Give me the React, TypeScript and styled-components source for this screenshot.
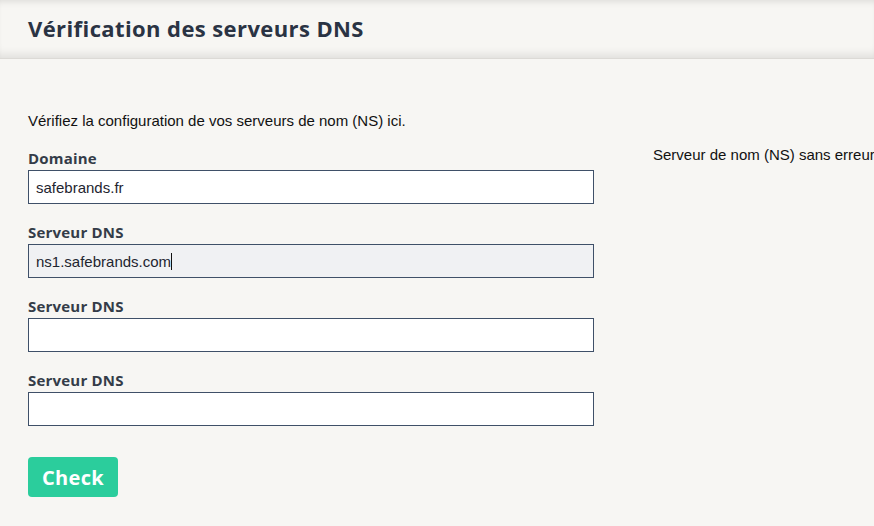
import styled, { createGlobalStyle } from 'styled-components';

const GlobalStyle = createGlobalStyle`
  html, body {
    margin: 0;
    padding: 0;
    background: #f7f6f3;
    overflow-x: hidden;
  }
  * { box-sizing: border-box; }
`;

const fields = [
    { label: 'Domaine', value: 'safebrands.fr', focused: false },
    { label: 'Serveur DNS', value: 'ns1.safebrands.com', focused: true },
    { label: 'Serveur DNS', value: '', focused: false },
    { label: 'Serveur DNS', value: '', focused: false },
];

export default function App() {
    return (
        <Page>
            <GlobalStyle />
            <Header>
                <Title>Vérification des serveurs DNS</Title>
            </Header>

            <Main>
                <Intro>Vérifiez la configuration de vos serveurs de nom (NS) ici.</Intro>
                <Columns>
                    <Form onSubmit={(e) => e.preventDefault()}>
                        {fields.map((f, i) => (
                            <Field key={i}>
                                <Label>{f.label}</Label>
                                <InputWrap>
                                    <Input $focused={f.focused} defaultValue={f.value} />
                                    {f.focused && <Caret />}
                                </InputWrap>
                            </Field>
                        ))}
                        <CheckBtn type="submit">Check</CheckBtn>
                    </Form>
                    <Result>Serveur de nom (NS) sans erreur</Result>
                </Columns>
            </Main>
        </Page>
    );
}

const Page = styled.div`
    min-height: 526px;
    width: 874px;
    background: #f7f6f3;
`;

const Header = styled.header`
    height: 59px;
    display: flex;
    align-items: center;
    padding: 0 28px 2px;
    background: #f7f6f3;
    box-shadow:
        inset 0 6px 6px -4px rgba(0, 0, 0, 0.1),
        inset 0 -10px 8px -6px rgba(0, 0, 0, 0.09);
    border-bottom: 1px solid #dcdad6;
`;

const Title = styled.h1`
    margin: 0;
    font-family: "Open Sans", "Noto Sans", sans-serif;
    font-size: 22px;
    font-weight: 700;
    letter-spacing: 0.4px;
    color: #2a3343;
`;

const Main = styled.main`
    padding: 53px 28px 0;
`;

const Intro = styled.p`
    margin: 0 0 19px;
    font-family: "Liberation Sans", Arial, sans-serif;
    font-size: 15px;
    line-height: 17px;
    color: #111;
`;

const Columns = styled.div`
    display: grid;
    grid-template-columns: 566px max-content;
    column-gap: 59px;
    align-items: start;
`;

const Form = styled.form`
    display: flex;
    flex-direction: column;
`;

const Field = styled.div`
    display: flex;
    flex-direction: column;
    gap: 2px;
    margin-bottom: 18px;
    &:last-of-type { margin-bottom: 31px; }
`;

const Label = styled.label`
    font-family: "Open Sans", "Noto Sans", sans-serif;
    font-size: 15px;
    font-weight: 700;
    line-height: 20px;
    letter-spacing: 0.2px;
    color: #343c48;
`;

const InputWrap = styled.div`
    position: relative;
`;

const Input = styled.input<{ $focused: boolean }>`
    display: block;
    height: 34px;
    width: 100%;
    border: 1px solid #3f5068;
    border-radius: 0;
    background: ${(p) => (p.$focused ? '#f0f1f3' : '#ffffff')};
    padding: 0 7px;
    font-family: "Liberation Sans", Arial, sans-serif;
    font-size: 15px;
    color: #1e2530;
    outline: none;
`;

const Caret = styled.span`
    position: absolute;
    left: 143px;
    top: 9px;
    width: 1px;
    height: 17px;
    background: #111;
`;

const CheckBtn = styled.button`
    align-self: flex-start;
    width: 90px;
    height: 40px;
    border: 0;
    border-radius: 4px;
    background: #2bcd9c;
    color: #fff;
    font-family: "Open Sans", "Noto Sans", sans-serif;
    font-size: 20px;
    font-weight: 700;
    letter-spacing: 0.3px;
    cursor: pointer;
`;

const Result = styled.div`
    margin-top: -2px;
    font-family: "Liberation Sans", Arial, sans-serif;
    font-size: 15px;
    line-height: 17px;
    color: #111;
    white-space: nowrap;
`;
